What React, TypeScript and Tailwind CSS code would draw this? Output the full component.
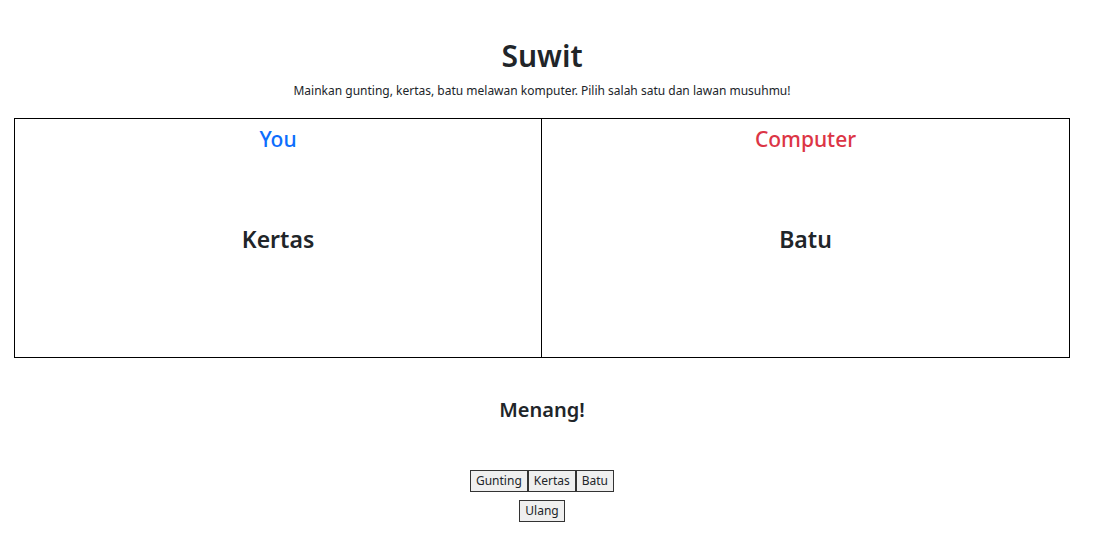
export default function App() {
  return (
    <div className="min-h-screen bg-white text-[#212529] font-['Noto_Sans',sans-serif]">
      <div className="ml-[14px] w-[1056px] pt-[36px]">
        {/* Header */}
        <h1 className="text-center text-[30px] leading-[40px] font-semibold">Suwit</h1>
        <p className="text-center text-[12px] leading-[20px] mt-[5px]">
          Mainkan gunting, kertas, batu melawan komputer. Pilih salah satu dan lawan musuhmu!
        </p>

        {/* Arena */}
        <div className="mt-[17px] grid grid-cols-2 border border-black h-[240px]">
          <div className="flex flex-col items-center border-r border-black pt-[5px]">
            <h3 className="text-[21px] leading-[30px] font-medium text-[#0d6efd]">You</h3>
            <div className="mt-[69px] text-[23px] leading-[32px] font-semibold">Kertas</div>
          </div>
          <div className="flex flex-col items-center pt-[5px]">
            <h3 className="text-[21px] leading-[30px] font-medium text-[#dc3545]">Computer</h3>
            <div className="mt-[69px] text-[23px] leading-[32px] font-semibold">Batu</div>
          </div>
        </div>

        {/* Result */}
        <h2 className="text-center text-[20px] leading-[28px] font-semibold mt-[38px]">Menang!</h2>

        {/* Controls */}
        <div className="flex justify-center mt-[46px]">
          <button className="h-[22px] px-[5px] text-[12px] bg-[#efefef] border border-[#333]">Gunting</button>
          <button className="h-[22px] px-[5px] text-[12px] bg-[#efefef] border border-[#333]">Kertas</button>
          <button className="h-[22px] px-[5px] text-[12px] bg-[#efefef] border border-[#333]">Batu</button>
        </div>
        <div className="flex justify-center mt-[8px]">
          <button className="h-[22px] px-[5px] text-[12px] bg-[#efefef] border border-[#333]">Ulang</button>
        </div>
      </div>
    </div>
  )
}
